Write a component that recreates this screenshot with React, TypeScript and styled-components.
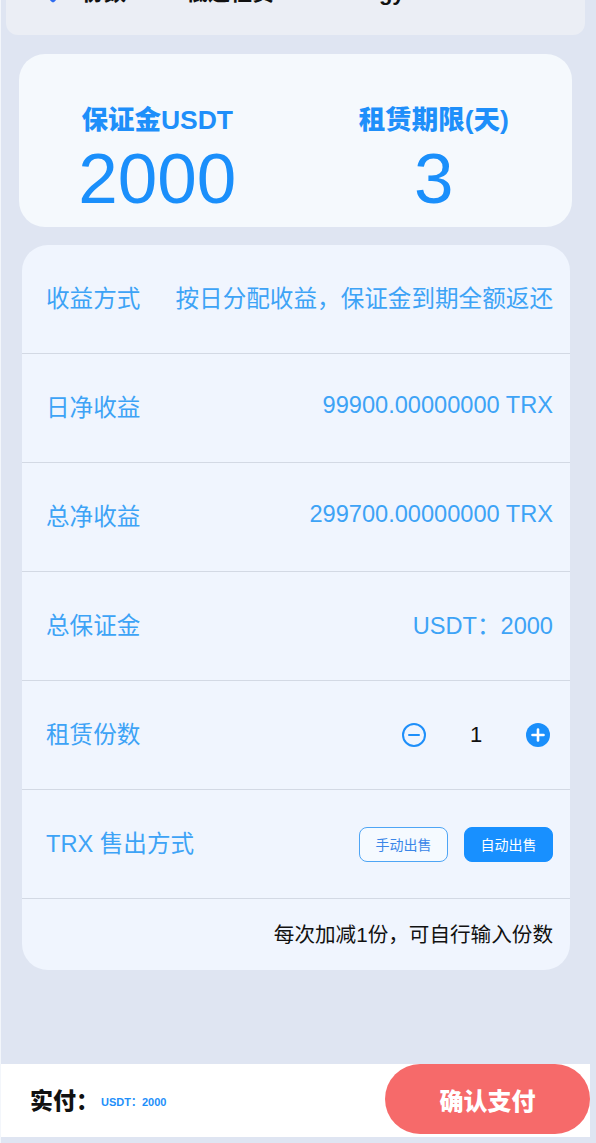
import React, { useState } from 'react';
import styled, { createGlobalStyle } from 'styled-components';

const GlobalStyle = createGlobalStyle`
  html, body {
    margin: 0;
    padding: 0;
    background: #dfe5f2;
    font-family: "Liberation Sans", "Noto Sans CJK SC", sans-serif;
  }
`;

const Page = styled.div`
  width: 596px;
  min-height: 1143px;
  box-sizing: border-box;
  border-left: 1px solid #f3f6fb;
  background: #dfe5f2;
  overflow: hidden;
  display: flex;
  flex-direction: column;
`;

const PrevCard = styled.div`
  margin: -40px 11px 0 5px;
  height: 75px;
  box-sizing: border-box;
  padding: 21px 0 0 42px;
  background: #ebeef5;
  border-radius: 0 0 12px 12px;
  display: flex;
  align-items: flex-start;
  gap: 24px;
`;

const PrevDot = styled.span`
  width: 10px;
  height: 10px;
  margin-top: 10px;
  background: #2f6cf0;
  transform: rotate(45deg);
  border-radius: 2px;
`;

const PrevText = styled.span<{ $w: number }>`
  width: ${p => p.$w}px;
  font-size: 22px;
  line-height: 24px;
  font-weight: 700;
  color: #111;
  white-space: nowrap;
`;

const SummaryCard = styled.div`
  margin: 19px 24px 0 18px;
  height: 173px;
  box-sizing: border-box;
  padding-top: 50px;
  background: #f5f9fd;
  border-radius: 26px;
  display: flex;
`;

const SummaryCol = styled.div`
  flex: 1;
  display: flex;
  flex-direction: column;
  align-items: center;
`;

const SummaryLabel = styled.div`
  font-size: 26.5px;
  line-height: 32px;
  font-weight: 900;
  color: #1e8ffa;
`;

const SummaryValue = styled.div`
  margin-top: 8px;
  font-size: 71px;
  line-height: 70px;
  color: #1a8ffb;
`;

const DetailCard = styled.div`
  margin: 18px 26px 0 21px;
  background: #f0f5fe;
  border-radius: 26px;
  overflow: hidden;
`;

const Row = styled.div`
  height: 108px;
  box-sizing: content-box;
  padding: 0 17px 0 24px;
  border-bottom: 1px solid #d3d9e4;
  display: flex;
  align-items: center;
  justify-content: space-between;
  font-size: 23.6px;
  color: #3da3f6;
`;

const RowText = styled.span`
  margin-bottom: 5px;
`;

const NoteRow = styled.div`
  height: 71px;
  padding: 0 17px 3px 24px;
  box-sizing: border-box;
  display: flex;
  align-items: center;
  justify-content: flex-end;
  font-size: 20.6px;
  color: #111;
`;

const Stepper = styled.div`
  display: flex;
  align-items: center;
  margin-right: 3px;
`;

const StepButton = styled.button`
  width: 24px;
  height: 24px;
  padding: 0;
  border: none;
  background: none;
  display: flex;
  cursor: pointer;
`;

const StepValue = styled.span`
  width: 100px;
  text-align: center;
  font-size: 22px;
  color: #111;
`;

const SellGroup = styled.div`
  display: flex;
  gap: 16px;
`;

const SellButton = styled.button<{ $active: boolean }>`
  width: 89px;
  height: 35px;
  border-radius: 8px;
  box-sizing: border-box;
  font-family: inherit;
  font-size: 14px;
  cursor: pointer;
  border: 1px solid ${p => (p.$active ? '#1890ff' : '#4ea5f5')};
  background: ${p => (p.$active ? '#1890ff' : '#f5faff')};
  color: ${p => (p.$active ? '#fff' : '#3a86e8')};
`;

const PayBar = styled.div`
  margin: 94px 6px 6px -1px;
  height: 73px;
  background: #fff;
  display: flex;
  align-items: flex-start;
  justify-content: space-between;
  padding-left: 30px;
`;

const PayInfo = styled.div`
  height: 70px;
  display: flex;
  align-items: center;
  gap: 2px;
`;

const PayLabel = styled.span`
  font-size: 23px;
  font-weight: 900;
  color: #111;
`;

const PayAmount = styled.span`
  margin-top: 4px;
  font-size: 11px;
  font-weight: 700;
  color: #1e8ffa;
`;

const ConfirmButton = styled.button`
  width: 205px;
  height: 70px;
  border: none;
  border-radius: 35px;
  background: #f66a6a;
  color: #fff;
  font-family: inherit;
  font-size: 24px;
  font-weight: 900;
  cursor: pointer;
`;

const MinusIcon = () => (
  <svg width="24" height="24" viewBox="0 0 24 24">
    <circle cx="12" cy="12" r="11" fill="none" stroke="#1e8ffa" strokeWidth="2" />
    <line x1="7" y1="12" x2="17" y2="12" stroke="#1e8ffa" strokeWidth="2" strokeLinecap="round" />
  </svg>
);

const PlusIcon = () => (
  <svg width="24" height="24" viewBox="0 0 24 24">
    <circle cx="12" cy="12" r="12" fill="#1a8ffb" />
    <line x1="6.5" y1="12" x2="17.5" y2="12" stroke="#fff" strokeWidth="2.6" strokeLinecap="round" />
    <line x1="12" y1="6.5" x2="12" y2="17.5" stroke="#fff" strokeWidth="2.6" strokeLinecap="round" />
  </svg>
);

const rows = [
  { label: '收益方式', value: '按日分配收益，保证金到期全额返还' },
  { label: '日净收益', value: '99900.00000000 TRX' },
  { label: '总净收益', value: '299700.00000000 TRX' },
  { label: '总保证金', value: 'USDT：2000' },
];

export default function App() {
  const [count, setCount] = useState(1);
  const [auto, setAuto] = useState(true);

  return (
    <Page>
      <GlobalStyle />
      <PrevCard>
        <PrevDot />
        <PrevText $w={80}>份数</PrevText>
        <PrevText $w={120}>低通租赁</PrevText>
        <PrevText $w={100}>Energy</PrevText>
      </PrevCard>

      <SummaryCard>
        <SummaryCol>
          <SummaryLabel>保证金USDT</SummaryLabel>
          <SummaryValue>2000</SummaryValue>
        </SummaryCol>
        <SummaryCol>
          <SummaryLabel>租赁期限(天)</SummaryLabel>
          <SummaryValue>3</SummaryValue>
        </SummaryCol>
      </SummaryCard>

      <DetailCard>
        {rows.map(r => (
          <Row key={r.label}>
            <RowText>{r.label}</RowText>
            <RowText>{r.value}</RowText>
          </Row>
        ))}
        <Row>
          <RowText>租赁份数</RowText>
          <Stepper>
            <StepButton onClick={() => setCount(c => Math.max(1, c - 1))}>
              <MinusIcon />
            </StepButton>
            <StepValue>{count}</StepValue>
            <StepButton onClick={() => setCount(c => c + 1)}>
              <PlusIcon />
            </StepButton>
          </Stepper>
        </Row>
        <Row>
          <RowText>TRX 售出方式</RowText>
          <SellGroup>
            <SellButton $active={!auto} onClick={() => setAuto(false)}>手动出售</SellButton>
            <SellButton $active={auto} onClick={() => setAuto(true)}>自动出售</SellButton>
          </SellGroup>
        </Row>
        <NoteRow>每次加减1份，可自行输入份数</NoteRow>
      </DetailCard>

      <PayBar>
        <PayInfo>
          <PayLabel>实付：</PayLabel>
          <PayAmount>USDT：2000</PayAmount>
        </PayInfo>
        <ConfirmButton>确认支付</ConfirmButton>
      </PayBar>
    </Page>
  );
}
